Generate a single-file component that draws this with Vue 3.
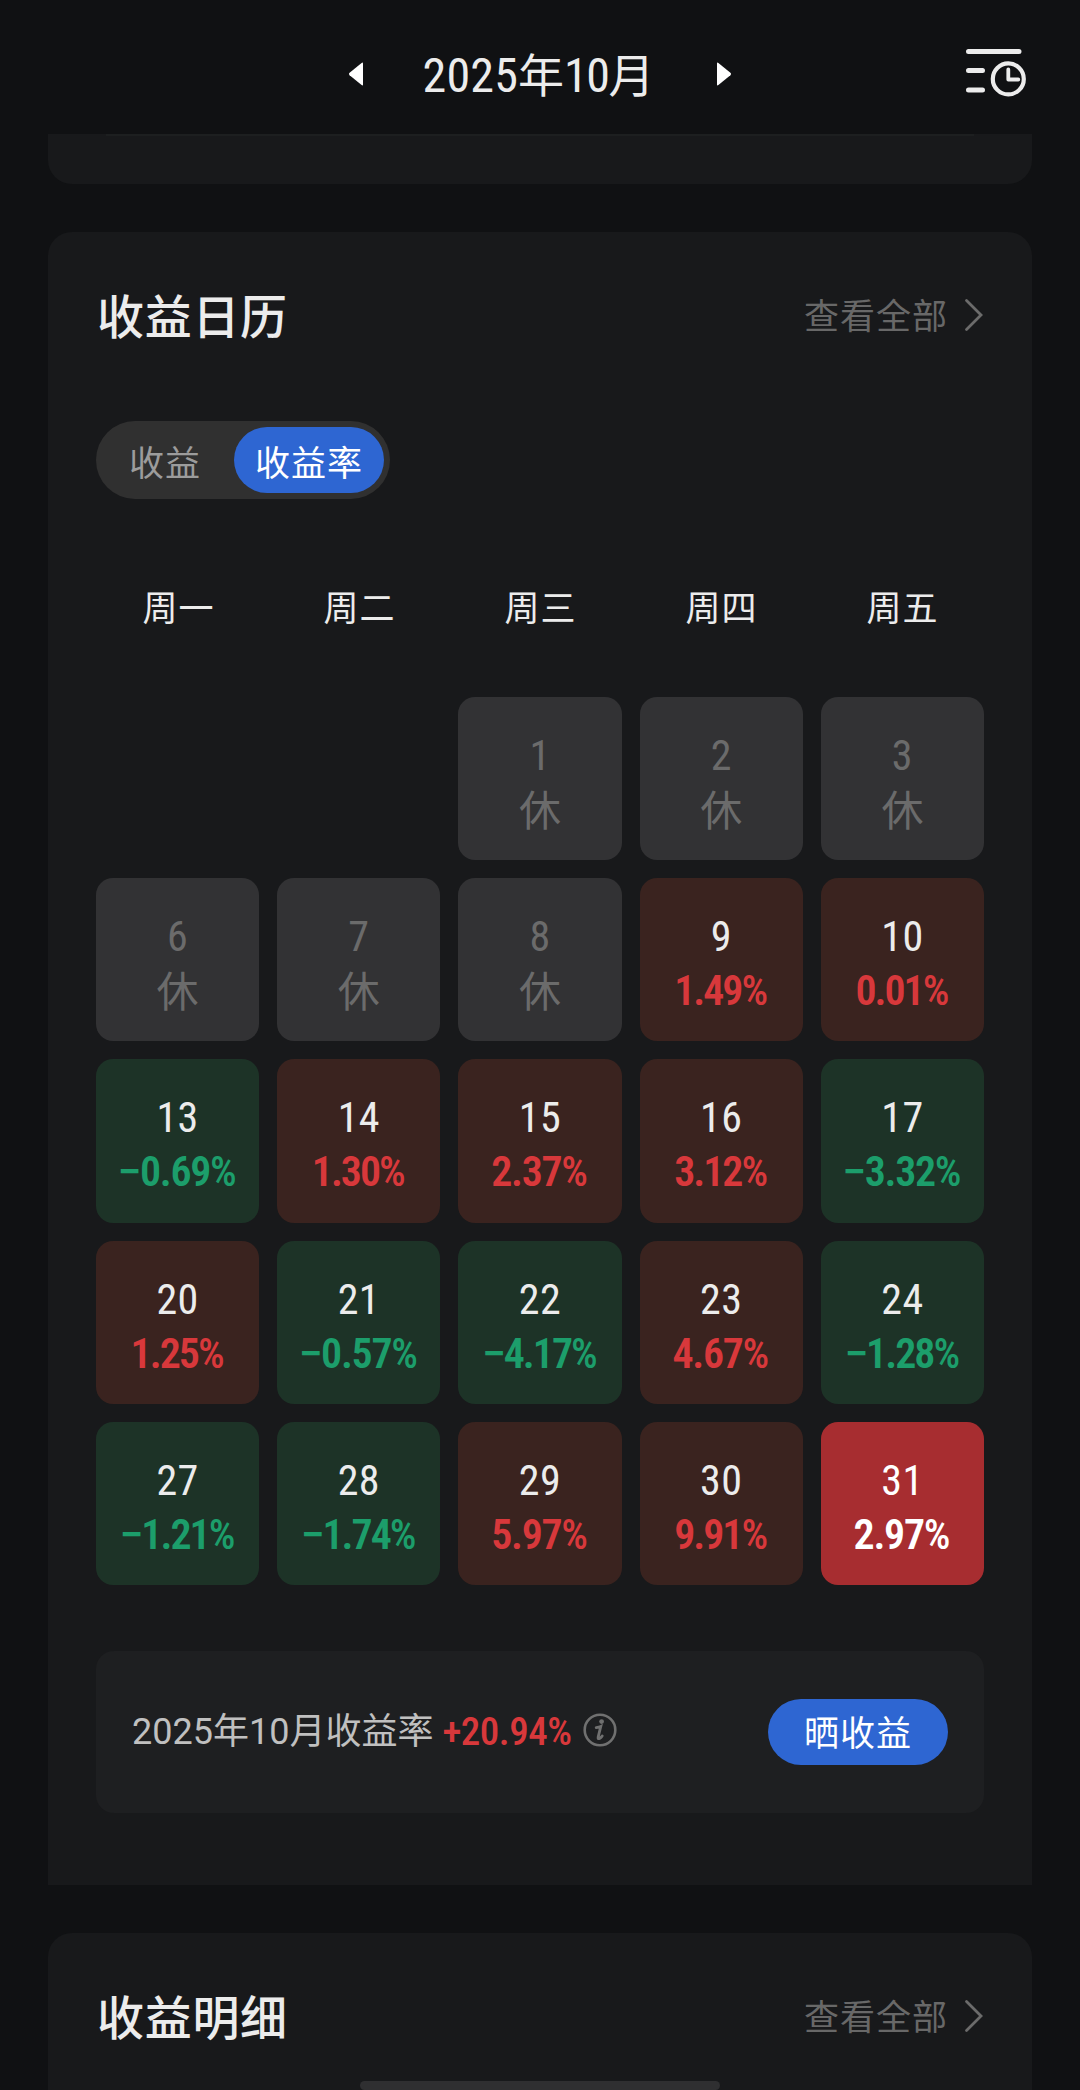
<script setup>
import { ref, computed } from 'vue';

const month = ref('2025年10月');
const tabs = ['收益', '收益率'];
const activeTab = ref('收益率');
const weekdays = ['周一', '周二', '周三', '周四', '周五'];
const selectedDay = ref(31);

// null is a trading day off
const days = ref([
  { day: 1, rate: null },
  { day: 2, rate: null },
  { day: 3, rate: null },
  { day: 6, rate: null },
  { day: 7, rate: null },
  { day: 8, rate: null },
  { day: 9, rate: 1.49 },
  { day: 10, rate: 0.01 },
  { day: 13, rate: -0.69 },
  { day: 14, rate: 1.3 },
  { day: 15, rate: 2.37 },
  { day: 16, rate: 3.12 },
  { day: 17, rate: -3.32 },
  { day: 20, rate: 1.25 },
  { day: 21, rate: -0.57 },
  { day: 22, rate: -4.17 },
  { day: 23, rate: 4.67 },
  { day: 24, rate: -1.28 },
  { day: 27, rate: -1.21 },
  { day: 28, rate: -1.74 },
  { day: 29, rate: 5.97 },
  { day: 30, rate: 9.91 },
  { day: 31, rate: 2.97 },
]);

const cells = computed(() => days.value.map(d => {
  if (d.rate === null) return { ...d, type: 'rest' };
  const text = Math.abs(d.rate).toFixed(2);
  return {
    ...d,
    text,
    type: d.rate < 0 ? 'down' : 'up',
    // the digit 1 is narrow, so these sit closer together
    tight: text.includes('1'),
  };
}))

const selectDay = (cell) => {
  if (cell.type !== 'rest') {
    selectedDay.value = cell.day;
  }
}
</script>

<template>
  <div class="page">
    <header class="topbar">
      <div class="month">
        <svg class="arrow" viewBox="0 0 14 24"><path d="M14 1.5v21q0 1.5-1.4.6L.6 13.2Q-.6 12 .6 10.8L12.6.9Q14 0 14 1.5z" /></svg>
        <h1><span class="narrow">2025</span>年<span class="narrow">10</span>月</h1>
        <svg class="arrow" viewBox="0 0 14 24"><path d="M0 1.5v21q0 1.5 1.4.6l12-9.9q1.2-1.2 0-2.4L1.4.9Q0 0 0 1.5z" /></svg>
      </div>
      <svg class="history" viewBox="0 0 66 54">
        <path d="M6.5 6.5h50.5M6.5 25.6h14M6.5 45.1h14" stroke-width="5" />
        <circle cx="46.3" cy="33.9" r="15.5" stroke-width="4.2" />
        <path d="M46.3 24.5v10h10" stroke-width="3.8" />
      </svg>
    </header>

    <section class="card card-prev"></section>

    <section class="card card-calendar">
      <div class="card-head">
        <h2>收益日历</h2>
        <a class="more"><span>查看全部</span>
          <svg viewBox="0 0 20 34"><path d="M2.5 2.5L17 17 2.5 31.5" /></svg>
        </a>
      </div>

      <div class="tabs">
        <button v-for="tab in tabs" :key="tab" :class="{ active: tab === activeTab }" @click="activeTab = tab">{{ tab }}</button>
      </div>

      <div class="weekdays">
        <span v-for="w in weekdays" :key="w">{{ w }}</span>
      </div>

      <div class="grid">
        <div v-for="cell in cells" :key="cell.day" class="cell"
          :class="[cell.type, { first: cell.day === 1, selected: cell.day === selectedDay }]" @click="selectDay(cell)">
          <span class="day">{{ cell.day }}</span>
          <span v-if="cell.type === 'rest'" class="off">休</span>
          <span v-else class="rate" :class="{ tight: cell.tight }"><b v-if="cell.type === 'down'">−</b>{{ cell.text }}<i>%</i></span>
        </div>
      </div>

      <div class="summary">
        <span class="label">{{ month }}收益率</span>
        <span class="total">+20.94<i>%</i></span>
        <svg class="info" viewBox="0 0 34 34">
          <circle cx="17" cy="17" r="15.3" fill="none" stroke="currentColor" stroke-width="2.6" />
          <circle cx="18.6" cy="8.6" r="2.4" fill="currentColor" />
          <path d="M13.2 14.6q3-.4 4.6-1.2l-2.6 10.4q-.6 2.6 1.4 1.6 1.6-.8 2.6-2.4" fill="none" stroke="currentColor" stroke-width="2.8" stroke-linecap="round" />
        </svg>
        <button class="share">晒收益</button>
      </div>
    </section>

    <section class="card card-detail">
      <div class="card-head">
        <h2>收益明细</h2>
        <a class="more"><span>查看全部</span>
          <svg viewBox="0 0 20 34"><path d="M2.5 2.5L17 17 2.5 31.5" /></svg>
        </a>
      </div>
    </section>

    <div class="home-bar"></div>
  </div>
</template>

<style>
body {
  margin: 0;
  background: #101113;
}
</style>

<style scoped>
.page {
  position: relative;
  width: 1080px;
  height: 2090px;
  overflow: hidden;
  background: #101113;
  color: #ececec;
  font-family: Roboto, "Noto Sans CJK SC", sans-serif;
  font-size: 36px;
}

h1,
h2 {
  margin: 0;
}

i {
  font-style: normal;
  font-weight: 500;
}

button {
  border: 0;
  padding: 0;
  font: inherit;
  font-size: 35px;
  letter-spacing: 1px;
}

.topbar {
  display: grid;
  grid-template-columns: 120px 1fr 120px;
  align-items: center;
  height: 134px;
}

.month {
  grid-column: 2;
  display: flex;
  align-items: center;
  justify-content: center;
  height: 148px;
}

.month h1 {
  box-sizing: border-box;
  width: 354px;
  padding: 3px 3px 0 0;
  text-align: center;
  font-size: 46px;
  font-weight: 400;
  line-height: 70px;
  white-space: nowrap;
}

.narrow {
  font-size: 48px;
  font-stretch: 75%;
  letter-spacing: .2px;
}

.narrow + .narrow {
  letter-spacing: -1.5px;
}

.arrow {
  width: 14px;
  height: 24px;
  fill: #fff;
}

.history {
  width: 66px;
  height: 54px;
  margin: -4px 0 0 2px;
  fill: none;
  stroke: #ececec;
  stroke-linecap: round;
  stroke-linejoin: round;
}

.card {
  box-sizing: border-box;
  margin: 0 48px;
  padding: 0 48px;
  background: #18191b;
}

.card-prev {
  height: 50px;
  margin-bottom: 48px;
  border-radius: 0 0 24px 24px;
}

.card-prev::before {
  content: "";
  display: block;
  height: 2px;
  margin: 0 10px;
  background: #1d1f20;
}

.card-calendar {
  height: 1653px;
  margin-bottom: 48px;
  border-radius: 24px 24px 0 0;
}

.card-detail {
  height: 200px;
  border-radius: 24px 24px 0 0;
}

.card-head {
  display: flex;
  align-items: center;
  justify-content: space-between;
  height: 166px;
}

.card-head h2 {
  padding: 5px 0 0 1px;
  font-size: 47px;
  font-weight: 500;
  line-height: 70px;
  letter-spacing: .7px;
}

.more {
  display: flex;
  align-items: center;
  color: #686868;
}

.more span {
  padding-bottom: 3px;
  font-size: 35px;
  letter-spacing: 1px;
}

.more svg {
  width: 20px;
  height: 34px;
  margin-left: 16px;
  fill: none;
  stroke: #6b6b6b;
  stroke-width: 2.8;
  stroke-linecap: round;
}

.tabs {
  display: flex;
  box-sizing: border-box;
  width: 294px;
  height: 78px;
  margin-top: 23px;
  padding: 6px;
  border-radius: 39px;
  background: #303030;
}

.tabs button {
  width: 132px;
  padding-right: 6px;
  border-radius: 33px;
  background: none;
  color: #9c9c9c;
}

.tabs .active {
  width: 150px;
  padding-right: 0;
  background: #2e66d2;
  color: #fff;
}

.weekdays,
.grid {
  display: grid;
  grid-template-columns: repeat(5, 1fr);
  column-gap: 18px;
}

.weekdays {
  margin: 84px 0 60px;
  padding-left: 1px;
  font-size: 35px;
  line-height: 54px;
  letter-spacing: 1px;
  text-align: center;
}

.grid {
  grid-auto-rows: 163.2px;
  row-gap: 18px;
}

.cell {
  display: flex;
  flex-direction: column;
  align-items: center;
  box-sizing: border-box;
  padding-top: 32px;
  border-radius: 17px;
  font-size: 42px;
  line-height: 54px;
}

.first {
  grid-column: 3;
}

.day {
  font-stretch: 75%;
  letter-spacing: .4px;
}

.rate {
  padding-right: 2px;
  font-stretch: 75%;
  font-weight: 600;
  letter-spacing: -1.3px;
}

.rate b {
  font-stretch: 100%;
  font-weight: 600;
}

.tight {
  letter-spacing: -2px;
}

.rest {
  background: #323234;
  color: #6b6b6b;
}

.off {
  padding-top: 2px;
}

.up {
  background: #3a231f;
}

.up .rate {
  color: #d8383b;
}

.down {
  background: #1d3327;
}

.down .rate {
  color: #1c9e6b;
}

.selected {
  background: #a72d30;
  color: #fff;
}

.selected .rate {
  color: #fff;
}

.summary {
  display: flex;
  align-items: center;
  box-sizing: border-box;
  height: 162px;
  margin-top: 66px;
  padding: 0 36px;
  border-radius: 18px;
  background: #1e1f21;
}

.label {
  padding-bottom: 7px;
  color: #c0c0c0;
}

.total {
  margin-left: 9px;
  color: #d8383b;
  font-size: 39px;
  font-stretch: 75%;
  font-weight: 500;
  letter-spacing: -.5px;
}

.info {
  width: 34px;
  height: 34px;
  margin: 0 0 3px 11px;
  color: #707070;
}

.share {
  width: 180px;
  height: 66px;
  margin-left: auto;
  padding-bottom: 3px;
  border-radius: 33px;
  background: #2e66d2;
  color: #fff;
}

.home-bar {
  position: absolute;
  left: 360px;
  bottom: 0;
  width: 360px;
  height: 9px;
  border-radius: 5px;
  background: #2f2f31;
}
</style>
